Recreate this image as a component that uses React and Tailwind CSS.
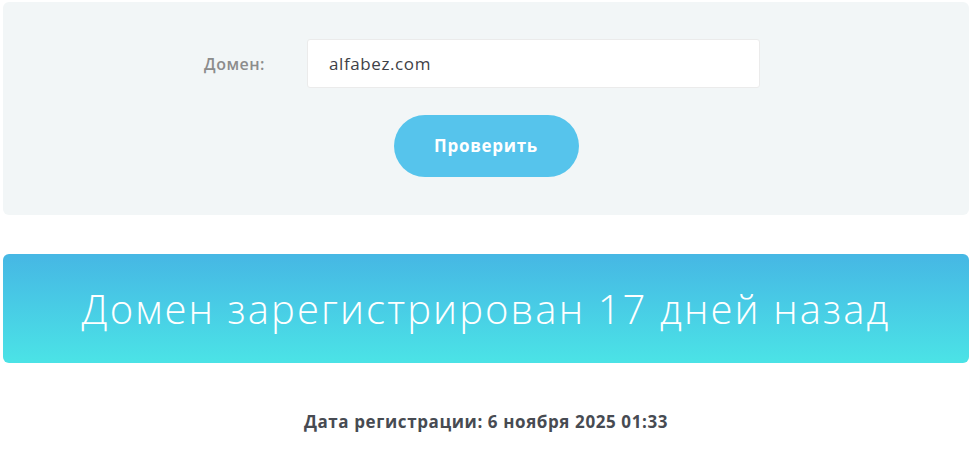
import React, { useState } from 'react';

const font = { fontFamily: '"Open Sans", "DejaVu Sans", sans-serif' };

const App = () => {
  const [domain, setDomain] = useState('alfabez.com');

  return (
    <div className="w-[972px] h-[458px] bg-white px-[3px] pt-[2px]" style={font}>
      {/* Check form */}
      <div className="bg-[#f2f6f7] rounded-md h-[213px] pt-[37px]">
        <div className="flex items-center">
          <label className="w-[262px] text-right text-[16px] font-semibold tracking-[0.5px] text-[#8c8c8c]">
            Домен:
          </label>
          <input
            value={domain}
            onChange={(e) => setDomain(e.target.value)}
            className="ml-[42px] w-[453px] h-[49px] bg-white border border-[#ebebeb] rounded-[3px] px-[21px] text-[17px] tracking-[0.6px] text-[#3e4147] outline-none"
          />
        </div>
        <div className="flex justify-center mt-[27px]">
          <button className="w-[185px] h-[62px] rounded-full bg-[#56c4ec] text-white text-[17px] tracking-[0.7px] font-bold">
            Проверить
          </button>
        </div>
      </div>

      {/* Result banner */}
      <div className="mt-[39px] h-[109px] rounded-md bg-gradient-to-b from-[#46b7e4] to-[#4be3e6] flex items-center justify-center">
        <h1 className="text-white text-[40px] tracking-[2.1px] font-light leading-none">
          Домен зарегистрирован 17 дней назад
        </h1>
      </div>

      {/* Registration date */}
      <p className="mt-[46px] text-center text-[17px] tracking-[0.6px] font-bold text-[#474b52]">
        Дата регистрации: 6 ноября 2025 01:33
      </p>
    </div>
  );
};

export default App;
